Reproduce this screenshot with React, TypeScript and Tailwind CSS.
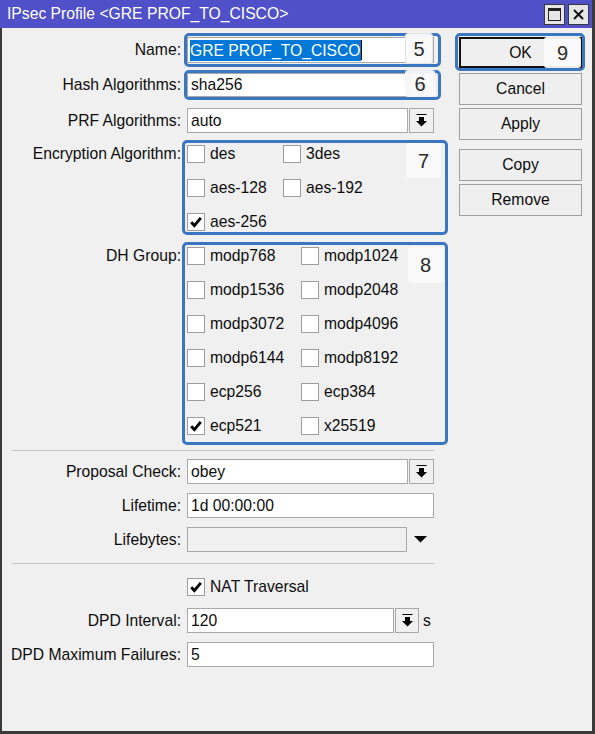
import React from 'react';

const BLUE = 'border-[#3b77c0]';

function DropIcon() {
  return (
    <svg width="11" height="13" viewBox="0 0 11 13">
      <rect x="0.5" y="0" width="10" height="1" fill="#000" />
      <rect x="3" y="3" width="5" height="4" fill="#000" />
      <polygon points="0,7 11,7 5.5,12.5" fill="#000" />
    </svg>
  );
}

function DropBtn({ w = 'w-[25px]', h = 'h-[25px]' }: { w?: string; h?: string }) {
  return (
    <div className={`${w} ${h} ml-[1px] flex items-center justify-center border border-[#a8a8a8] bg-[#f0f0f0]`}>
      <DropIcon />
    </div>
  );
}

function Check({ checked }: { checked?: boolean }) {
  return (
    <span className="flex h-[18px] w-[18px] shrink-0 items-center justify-center border border-[#9d9d9d] bg-white">
      {checked && (
        <svg width="14" height="14" viewBox="0 0 14 14">
          <path d="M2.2 7.2 L5.4 10.6 L11.8 2.8" stroke="#000" strokeWidth="2.9" fill="none" />
        </svg>
      )}
    </span>
  );
}

function Badge({ n, className }: { n: string; className: string }) {
  return (
    <div
      className={`absolute flex items-center justify-center rounded-[3px] bg-[#f9f9f9]/95 text-[20px] text-[#2b2b2b] ${className}`}
    >
      {n}
    </div>
  );
}

function Label({ text, className = '' }: { text: string; className?: string }) {
  return <div className={`w-[180px] shrink-0 pr-[1px] text-right ${className}`}>{text}</div>;
}

function Field({ value, w = 'w-[247px]', h = 'h-[25px]', disabled }: { value?: string; w?: string; h?: string; disabled?: boolean }) {
  return (
    <div
      className={`${w} ${h} flex items-center border border-[#a8a8a8] pl-[3px] ${disabled ? 'bg-[#f0f0f0]' : 'bg-white'}`}
    >
      {value}
    </div>
  );
}

function Btn({ text, className = '' }: { text: string; className?: string }) {
  return (
    <div className={`flex h-[32px] w-[123px] items-center justify-center border border-[#a0a0a0] bg-[#efefef] ${className}`}>
      {text}
    </div>
  );
}

function Opt({ label, checked, w }: { label: string; checked?: boolean; w: string }) {
  return (
    <div className={`flex h-[20px] items-center gap-[5px] ${w}`}>
      <Check checked={checked} />
      <span>{label}</span>
    </div>
  );
}

export default function App() {
  const dh = [
    ['modp768', 'modp1024'],
    ['modp1536', 'modp2048'],
    ['modp3072', 'modp4096'],
    ['modp6144', 'modp8192'],
    ['ecp256', 'ecp384'],
    ['ecp521', 'x25519'],
  ];

  return (
    <div className="flex h-[734px] w-[595px] flex-col border-r-[3px] border-[#3a3a3a] font-['Liberation_Sans',Arial,sans-serif] text-[15.7px] text-[#0d0d0d]">
      {/* Title bar */}
      <div className="flex h-[28px] shrink-0 items-center bg-[#5050c8] pl-[7px] pr-[3px]">
        <span className="text-[15.7px] text-white">IPsec Profile &lt;GRE PROF_TO_CISCO&gt;</span>
        <div className="ml-auto flex gap-[3px]">
          <div className="flex h-[21px] w-[21px] items-center justify-center border border-[#3a3a3a] bg-[#e6e6e6]">
            <svg width="13" height="13" viewBox="0 0 13 13">
              <rect x="0.5" y="0.5" width="12" height="12" fill="none" stroke="#222" strokeWidth="1" />
              <rect x="0" y="0" width="13" height="3" fill="#222" />
            </svg>
          </div>
          <div className="flex h-[21px] w-[21px] items-center justify-center border border-[#3a3a3a] bg-[#e6e6e6]">
            <svg width="11" height="11" viewBox="0 0 11 11">
              <path d="M1 1 L10 10 M10 1 L1 10" stroke="#111" strokeWidth="2" />
            </svg>
          </div>
        </div>
      </div>

      {/* Body */}
      <div className="flex flex-1 border-b-[3px] border-l-2 border-[#3a3a3a] bg-[#f0f0f0]">
        {/* Form */}
        <div className="flex w-[453px] flex-col pt-[5px]">
          <div className="flex h-[34px] items-center">
            <Label text="Name:" />
            <div className={`relative ml-[2px] h-[34px] w-[257px] rounded-[5px] border-[3px] ${BLUE} pt-[1px]`}>
              <div className="flex h-[26px] w-[247px] items-center border border-[#a8a8a8] bg-white pl-[2px]">
                <span className="bg-[#0078d7] leading-[21px] text-white">GRE PROF_TO_CISCO</span>
                <span className="h-[20px] w-[1px] bg-black" />
              </div>
              <Badge n="5" className="right-[5px] top-[-3px] h-[31px] w-[28px] border border-[#e4e4e4]" />
            </div>
          </div>

          <div className="mt-[3px] flex h-[30px] items-center">
            <Label text="Hash Algorithms:" />
            <div className={`relative ml-[2px] flex h-[30px] w-[257px] rounded-[5px] border-[3px] ${BLUE}`}>
              <Field value="sha256" w="w-[221px]" h="h-[24px]" />
              <DropBtn h="h-[24px]" />
              <Badge n="6" className="right-[3px] top-[-3px] h-[27px] w-[30px]" />
            </div>
          </div>

          <div className="mt-[8px] flex h-[25px] items-center">
            <Label text="PRF Algorithms:" />
            <div className="ml-[5px] flex">
              <Field value="auto" w="w-[221px]" />
              <DropBtn />
            </div>
          </div>

          <div className="mt-[7px] flex">
            <Label text="Encryption Algorithm:" className="mt-[4px] leading-[20px]" />
            <div className={`relative ml-0 w-[266px] rounded-[5px] border-[3px] ${BLUE} pl-[2px] pt-[1px]`}>
              <div className="flex flex-col gap-[14px]">
                <div className="flex">
                  <Opt label="des" w="w-[96px]" />
                  <Opt label="3des" w="w-[96px]" />
                </div>
                <div className="flex">
                  <Opt label="aes-128" w="w-[96px]" />
                  <Opt label="aes-192" w="w-[96px]" />
                </div>
                <div className="flex">
                  <Opt label="aes-256" checked w="w-[96px]" />
                </div>
              </div>
              <Badge n="7" className="right-[4px] top-0 h-[35px] w-[35px]" />
            </div>
          </div>

          <div className="mt-[7px] flex">
            <Label text="DH Group:" className="mt-[4px] leading-[20px]" />
            <div className={`relative w-[266px] rounded-[5px] border-[3px] ${BLUE} pb-[6px] pl-[2px] pt-[1px]`}>
              <div className="flex flex-col gap-[14px]">
                {dh.map(([a, b]) => (
                  <div key={a} className="flex">
                    <Opt label={a} checked={a === 'ecp521'} w="w-[114px]" />
                    <Opt label={b} w="w-[114px]" />
                  </div>
                ))}
              </div>
              <Badge n="8" className="right-[2px] top-[2px] h-[36px] w-[35px]" />
            </div>
          </div>

          <div className="ml-[10px] mt-[5px] h-px w-[422px] bg-[#c4c4c4]" />

          <div className="mt-[8px] flex h-[25px] items-center">
            <Label text="Proposal Check:" />
            <div className="ml-[5px] flex">
              <Field value="obey" w="w-[221px]" />
              <DropBtn />
            </div>
          </div>

          <div className="mt-[9px] flex h-[25px] items-center">
            <Label text="Lifetime:" />
            <div className="ml-[5px]">
              <Field value="1d 00:00:00" />
            </div>
          </div>

          <div className="mt-[9px] flex h-[25px] items-center">
            <Label text="Lifebytes:" />
            <div className="ml-[5px] flex items-center">
              <Field w="w-[220px]" disabled />
              <svg className="ml-[7px]" width="13" height="7" viewBox="0 0 13 7">
                <polygon points="0,0 13,0 6.5,6.5" fill="#000" />
              </svg>
            </div>
          </div>

          <div className="ml-[10px] mt-[11px] h-px w-[422px] bg-[#c4c4c4]" />

          <div className="mt-[13px] flex h-[19px] items-center">
            <div className="w-[185px] shrink-0" />
            <div className="flex items-center gap-[5px]">
              <Check checked />
              <span>NAT Traversal</span>
            </div>
          </div>

          <div className="mt-[12px] flex h-[25px] items-center">
            <Label text="DPD Interval:" />
            <div className="ml-[5px] flex items-center">
              <Field value="120" w="w-[207px]" />
              <DropBtn w="w-[24px]" />
              <span className="ml-[4px]">s</span>
            </div>
          </div>

          <div className="mt-[9px] flex h-[25px] items-center">
            <Label text="DPD Maximum Failures:" />
            <div className="ml-[5px]">
              <Field value="5" />
            </div>
          </div>
        </div>

        {/* Buttons */}
        <div className="flex flex-col pt-[5px]">
          <div className={`relative h-[38px] w-[130px] rounded-[5px] border-[3px] ${BLUE} pl-[1px] pt-[1px]`}>
            <div className="flex h-[31px] w-[123px] items-center justify-center border-2 border-[#111] bg-[#efefef]">
              OK
            </div>
            <Badge n="9" className="right-[1px] top-[1px] h-[31px] w-[37px]" />
          </div>
          <Btn text="Cancel" className="ml-[4px] mt-[2px]" />
          <Btn text="Apply" className="ml-[4px] mt-[3px]" />
          <Btn text="Copy" className="ml-[4px] mt-[9px]" />
          <Btn text="Remove" className="ml-[4px] mt-[3px]" />
        </div>
      </div>
    </div>
  );
}
